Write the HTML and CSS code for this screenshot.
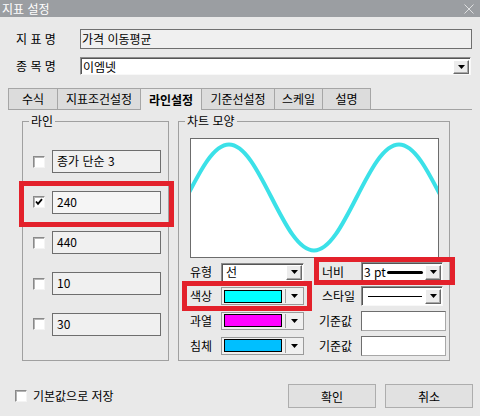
FILE: index.html
```html
<!DOCTYPE html>
<html lang="ko">
<head>
<meta charset="utf-8">
<title>지표 설정</title>
<link rel="stylesheet" href="styles.css">
</head>
<body>
<div class="dialog">
  <div class="titlebar">
    <span class="title">지표 설정</span>
    <svg class="close" width="10" height="10" viewBox="0 0 10 10"><path d="M0.5 0.5 L9.5 9.5 M9.5 0.5 L0.5 9.5" stroke="#dedfe0" stroke-width="1" fill="none"/></svg>
  </div>

  <div class="field-row r1">
    <span class="flabel">지 표 명</span>
    <div class="textbox-lg">가격 이동평균</div>
  </div>
  <div class="field-row r2">
    <span class="flabel">종 목 명</span>
    <div class="combo combo-lg">
      <span class="ctext">이엠넷</span>
      <span class="ddbtn"><svg width="7" height="4" viewBox="0 0 7 4"><polygon points="0,0 7,0 3.5,4" fill="#000"/></svg></span>
    </div>
  </div>

  <div class="tabs">
    <span class="tab t1">수식</span>
    <span class="tab t2">지표조건설정</span>
    <span class="tab t3 active">라인설정</span>
    <span class="tab t4">기준선설정</span>
    <span class="tab t5">스케일</span>
    <span class="tab t6">설명</span>
  </div>

  <div class="panel">
    <fieldset class="group g-left">
      <legend>라인</legend>
      <div class="lines">
        <div class="line-row"><span class="chk"></span><div class="tb">종가 단순 3</div></div>
        <div class="line-row"><span class="chk checked"><svg width="8" height="8" viewBox="0 0 8 8"><path d="M1 3.5 L3 5.8 L7 1.2" stroke="#000" stroke-width="1.8" fill="none"/></svg></span><div class="tb sel">240</div></div>
        <div class="line-row"><span class="chk"></span><div class="tb">440</div></div>
        <div class="line-row"><span class="chk"></span><div class="tb">10</div></div>
        <div class="line-row"><span class="chk"></span><div class="tb">30</div></div>
      </div>
    </fieldset>

    <fieldset class="group g-right">
      <legend>차트 모양</legend>
      <div class="chart-wrap">
        <div class="chart">
          <svg width="247" height="118" viewBox="0 0 247 118">
            <path d="M-4.5 58.5 C9.36 31.35 22.62 5.5 38 5.5 C53.38 5.5 66.64 31.35 80.5 58.5 C94.36 85.65 107.62 111.5 123 111.5 C138.38 111.5 151.64 85.65 165.5 58.5 C179.36 31.35 192.62 5.5 208 5.5 C223.38 5.5 236.64 31.35 250.5 58.5" stroke="#3be1e8" stroke-width="4" fill="none"/>
          </svg>
        </div>
        <div class="ctrls">
          <span class="clabel">유형</span>
          <div class="combo c-type">
            <span class="ctext">선</span>
            <span class="ddbtn"><svg width="7" height="4" viewBox="0 0 7 4"><polygon points="0,0 7,0 3.5,4" fill="#000"/></svg></span>
          </div>
          <span class="clabel rl">너비</span>
          <div class="combo c-right">
            <span class="ctext">3 pt</span>
            <span class="thick"></span>
            <span class="ddbtn"><svg width="7" height="4" viewBox="0 0 7 4"><polygon points="0,0 7,0 3.5,4" fill="#000"/></svg></span>
          </div>

          <span class="clabel">색상</span>
          <div class="ccombo">
            <span class="swatch cyan"></span><span class="sep"></span>
            <span class="carrow"><svg width="7" height="4" viewBox="0 0 7 4"><polygon points="0,0 7,0 3.5,4" fill="#000"/></svg></span>
          </div>
          <span class="clabel rl">스타일</span>
          <div class="combo c-right">
            <span class="thin"></span>
            <span class="ddbtn"><svg width="7" height="4" viewBox="0 0 7 4"><polygon points="0,0 7,0 3.5,4" fill="#000"/></svg></span>
          </div>

          <span class="clabel">과열</span>
          <div class="ccombo">
            <span class="swatch magenta"></span><span class="sep"></span>
            <span class="carrow"><svg width="7" height="4" viewBox="0 0 7 4"><polygon points="0,0 7,0 3.5,4" fill="#000"/></svg></span>
          </div>
          <span class="clabel rl rl2">기준값</span>
          <div class="vbox"></div>

          <span class="clabel">침체</span>
          <div class="ccombo">
            <span class="swatch sky"></span><span class="sep"></span>
            <span class="carrow"><svg width="7" height="4" viewBox="0 0 7 4"><polygon points="0,0 7,0 3.5,4" fill="#000"/></svg></span>
          </div>
          <span class="clabel rl rl2">기준값</span>
          <div class="vbox"></div>
        </div>
      </div>
    </fieldset>
  </div>

  <div class="footer">
    <span class="chk"></span>
    <span class="save-label">기본값으로 저장</span>
    <div class="buttons">
      <button class="btn">확인</button>
      <button class="btn">취소</button>
    </div>
  </div>

  <div class="hl hl-line"></div>
  <div class="hl hl-color"></div>
  <div class="hl hl-width"></div>
</div>
</body>
</html>
```
FILE: styles.css
```css
* { box-sizing: border-box; }
html, body { margin: 0; padding: 0; }
body {
  width: 480px;
  height: 416px;
  overflow: hidden;
  background: #e9e9e9;
  font-family: "Noto Sans CJK KR", "Noto Sans", sans-serif;
  font-size: 12px;
  color: #000;
}
.dialog { position: relative; width: 480px; height: 416px; }

.titlebar {
  height: 17px;
  background: #9b9ea2;
  color: #fff;
  display: flex;
  align-items: center;
  justify-content: space-between;
  padding: 0 6px 0 2px;
  font-size: 12px;
  line-height: 17px;
}
.close { display: block; }

.field-row { display: flex; align-items: center; padding-left: 16px; }
.r1 { margin-top: 12px; height: 20px; }
.r2 { margin-top: 8px; height: 18px; }
.flabel { width: 64px; line-height: 14px; }

.textbox-lg {
  width: 392px;
  height: 20px;
  background: #f0f0f0;
  border: 1px solid #6f6f6f;
  padding-left: 1px;
  line-height: 17px;
}

.combo {
  display: flex;
  align-items: center;
  background: #fff;
  border: 1px solid;
  border-color: #8c8c8c #f8f8f8 #f8f8f8 #8c8c8c;
  box-shadow: inset 1px 1px 0 #555;
}
.combo-lg { width: 391px; height: 18px; padding: 1px 1px 0 2px; }
.ctext { flex: none; line-height: 14px; }
.ddbtn {
  margin-left: auto;
  width: 16px;
  height: 14px;
  background: #ececec;
  border: 1px solid;
  border-color: #fff #6a6a6a #6a6a6a #fff;
  box-shadow: inset -1px -1px 0 #a8a8a8;
  display: flex;
  align-items: center;
  justify-content: center;
}
.ddbtn svg { display: block; }

.tabs {
  display: flex;
  margin: 13px 8px 0 8px;
  height: 22px;
  border-bottom: 1px solid #a3a3a3;
}
.tab {
  height: 21px;
  border: 1px solid #a6a6a6;
  border-bottom: none;
  background: #dcdcdc;
  display: flex;
  align-items: center;
  justify-content: center;
  margin-right: -1px;
  line-height: 14px;
}
.t1 { width: 50px; }
.t2 { width: 84px; }
.t3 { width: 62px; }
.t4 { width: 74px; }
.t5 { width: 49px; }
.t6 { width: 49px; }
.tab.active {
  background: #e9e9e9;
  font-weight: bold;
  height: 22px;
  position: relative;
  z-index: 1;
}

.panel { display: flex; gap: 9px; padding: 4px 0 0 22px; }
.group {
  margin: 0;
  padding: 0;
  border: 1px solid #a0a0a0;
  height: 247px;
  min-width: 0;
}
.group legend {
  padding: 0 2px;
  margin-left: 6px;
  line-height: 14px;
  font-size: 12px;
}
.g-left { width: 147px; }
.g-right { width: 272px; }

.lines {
  padding: 22px 0 0 10px;
  display: flex;
  flex-direction: column;
  gap: 17.7px;
}
.line-row { display: flex; align-items: center; height: 23px; }
.chk {
  flex: none;
  width: 12px;
  height: 12px;
  background: #fff;
  border: 1px solid;
  border-color: #8a8a8a #f4f4f4 #f4f4f4 #8a8a8a;
  box-shadow: inset 1px 1px 0 #b4b4b4;
  display: flex;
  align-items: center;
  justify-content: center;
}
.line-row .chk { margin-right: 7px; }
.chk svg { display: block; }
.tb {
  width: 109px;
  height: 23px;
  background: #f0f0f0;
  border: 1px solid #6e6e6e;
  padding-left: 4px;
  line-height: 20px;
}
.tb.sel { background: #f5f5f5; }

.chart-wrap { padding: 10px 0 0 11px; }
.chart {
  width: 249px;
  height: 120px;
  background: #fff;
  border: 1px solid #6c6c6c;
  overflow: hidden;
}
.chart svg { display: block; }

.ctrls {
  margin-top: 2px;
  display: grid;
  grid-template-columns: 31px 83px 57px 85px;
  grid-template-rows: 24px 24px 25px 25px;
  align-items: center;
}
.clabel { line-height: 14px; }
.clabel.rl { padding-left: 18px; }
.clabel.rl2 { padding-left: 15px; }

.c-type { width: 83px; height: 19px; padding: 0 1px 0 4px; }
.c-right { width: 82px; height: 20px; padding: 0 1px 0 2px; }
.c-type .ddbtn, .c-right .ddbtn { height: 15px; }
.thick {
  width: 36px;
  height: 3px;
  background: #000;
  border-radius: 2px;
  margin-left: 1px;
}
.thin {
  width: 54px;
  height: 1px;
  background: #000;
  margin-left: 4px;
}

.ccombo {
  width: 83px;
  height: 18px;
  background: #f0f0f0;
  border: 1px solid #9a9a9a;
  display: flex;
  align-items: center;
  padding-left: 2px;
}
.swatch { width: 58px; height: 13px; border: 1px solid #000; }
.swatch.cyan { background: #00ffff; }
.swatch.magenta { background: #ff00ff; }
.swatch.sky { background: #00bfff; }
.sep { width: 1px; height: 14px; background: #a0a0a0; margin-left: 3px; }
.carrow { flex: 1; display: flex; justify-content: center; }
.carrow svg { display: block; }

.vbox {
  width: 85px;
  height: 20px;
  background: #fff;
  border: 1px solid;
  border-color: #6e6e6e #a8a8a8 #a8a8a8 #6e6e6e;
}

.footer {
  display: flex;
  align-items: center;
  height: 24px;
  margin-top: 23px;
  padding: 0 7px 0 15px;
}
.save-label { margin-left: 6px; line-height: 14px; }
.buttons { margin-left: auto; display: flex; gap: 9px; }
.btn {
  width: 88px;
  height: 24px;
  background: #e1e1e1;
  border: 1px solid #adadad;
  font-family: inherit;
  font-size: 12px;
  color: #000;
  padding: 0;
}

.hl {
  position: absolute;
  border: 5px solid #e3212b;
  pointer-events: none;
}
.hl-line { left: 19px; top: 181px; width: 155px; height: 46px; }
.hl-color { left: 182px; top: 281px; width: 130px; height: 30px; }
.hl-width { left: 314px; top: 257px; width: 141px; height: 28px; }
```
